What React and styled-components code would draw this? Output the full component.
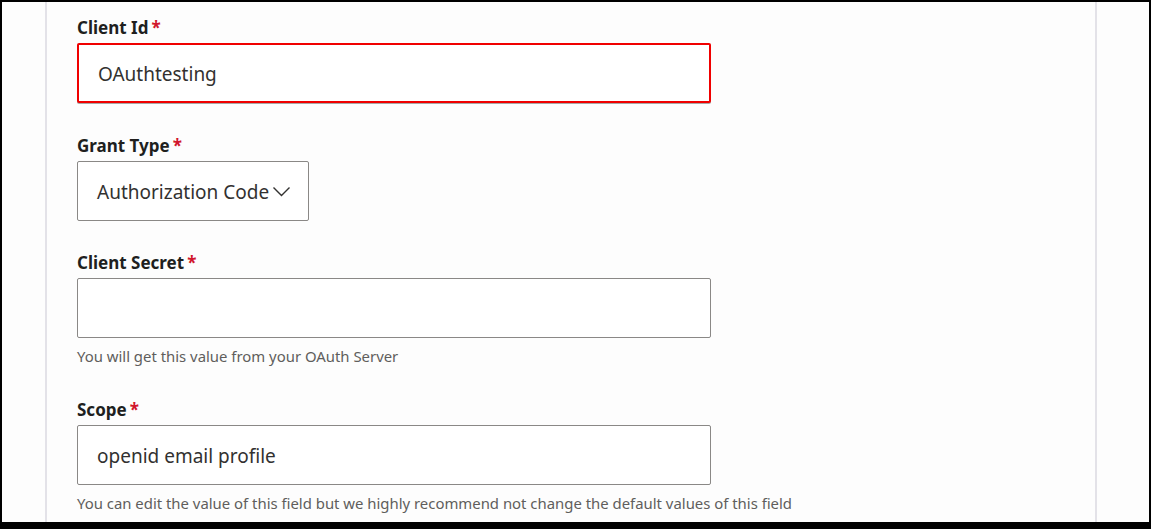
import styled, { createGlobalStyle } from "styled-components";

const GlobalStyle = createGlobalStyle`
  html, body {
    margin: 0;
    padding: 0;
    background: #ffffff;
  }
  * {
    box-sizing: border-box;
  }
`;

const Frame = styled.div`
  width: 1151px;
  height: 529px;
  border: 2px solid #000;
  border-bottom-width: 7px;
  background: #fdfdfd;
  overflow: hidden;
  font-family: "Noto Sans", "Open Sans", sans-serif;
`;

const Panel = styled.div`
  margin-left: 43px;
  width: 1052px;
  height: 100%;
  border-left: 2px solid #e3e2e8;
  border-right: 2px solid #e3e2e8;
  padding: 13px 30px 0 30px;
  display: flex;
  flex-direction: column;
`;

const Field = styled.div`
  display: flex;
  flex-direction: column;
  margin-bottom: ${(p) => p.gap || 28}px;
`;

const Label = styled.label`
  font-size: 17px;
  font-weight: 700;
  color: #201f1e;
  line-height: 25px;
  margin-bottom: 3px;
  display: flex;
  align-items: baseline;
`;

const Star = styled.span`
  color: #d1162c;
  margin-left: 3px;
`;

const TextBox = styled.div`
  width: ${(p) => p.width || 634}px;
  height: 60px;
  border: ${(p) => (p.error ? "2px solid #f00000" : "1px solid #8a8886")};
  border-radius: 2px;
  box-shadow: ${(p) => (p.error ? "0 1px 0 #a8a8a8" : "none")};
  padding-left: 19px;
  padding-top: 1px;
  display: flex;
  align-items: center;
  font-size: 19px;
  color: #323130;
  background: #fff;
`;

const SelectBox = styled(TextBox)`
  gap: 3px;
`;

const Chevron = () => (
  <svg width="19" height="12" viewBox="0 0 19 12" fill="none">
    <polyline points="1.5,1.5 9.5,9.5 17.5,1.5" stroke="#323130" strokeWidth="1.4" />
  </svg>
);

const Help = styled.div`
  font-size: 14.9px;
  color: #605e5c;
  margin-top: 8px;
  line-height: 20px;
`;

export default function App() {
  return (
    <>
      <GlobalStyle />
      <Frame>
        <Panel>
          <Field gap={30}>
            <Label>
              Client Id<Star>*</Star>
            </Label>
            <TextBox error>OAuthtesting</TextBox>
          </Field>
          <Field gap={29}>
            <Label>
              Grant Type<Star>*</Star>
            </Label>
            <SelectBox width={232}>
              Authorization Code
              <Chevron />
            </SelectBox>
          </Field>
          <Field gap={31}>
            <Label>
              Client Secret<Star>*</Star>
            </Label>
            <TextBox />
            <Help>You will get this value from your OAuth Server</Help>
          </Field>
          <Field>
            <Label>
              Scope<Star>*</Star>
            </Label>
            <TextBox>openid email profile</TextBox>
            <Help>
              You can edit the value of this field but we highly recommend not change the default
              values of this field
            </Help>
          </Field>
        </Panel>
      </Frame>
    </>
  );
}
